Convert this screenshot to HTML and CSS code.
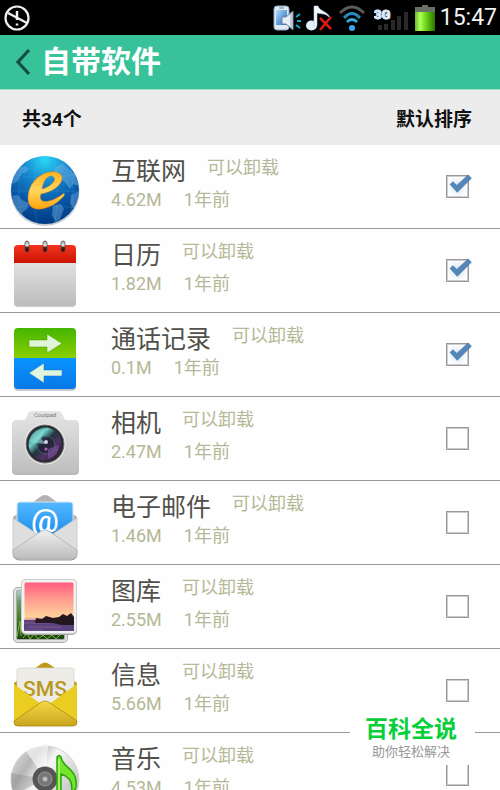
FILE: index.html
```html
<!DOCTYPE html>
<html lang="zh-CN">
<head>
    <meta charset="UTF-8">
    <meta name="viewport" content="width=device-width, initial-scale=1.0">
    <title>自带软件</title>
    <link rel="stylesheet" href="styles.css">
</head>
<body>
    <div class="app">
        <div class="status-bar">
            <svg width="26" height="26" viewBox="0 0 26 26" fill="none" stroke="#f0f0f0">
                <circle cx="13" cy="13" r="11.5" stroke-width="2.2"/>
                <path d="M4 8L23 18" stroke-width="2.2"/>
                <path d="M13 6V15M13 18.500V20.500" stroke-width="2.500"/>
            </svg>
            <div class="status-icons">
                <svg width="28" height="28" viewBox="0 0 28 28">
                    <defs>
                        <linearGradient id="phone" x2="1" y2="1"><stop stop-color="#b5dcff"/><stop offset="1" stop-color="#1765b8"/></linearGradient>
                    </defs>
                    <rect x="1" y="2" width="15" height="24" rx="3" fill="#dfe8f3" stroke="#8fa9c9"/>
                    <rect x="3" y="6" width="11" height="15" fill="url(#phone)"/>
                    <path d="M6 4H11" stroke="#71839b"/>
                    <path d="M9 13H13L20 7V26L13 20H9Z" fill="#e6eef7" stroke="#6f86a2"/>
                    <path d="M18 9V24" stroke="#97a9be"/>
                    <path d="M23 13L27 10M24 17H28M23 21L27 24" stroke="#16a9cf" stroke-width="2"/>
                </svg>
                <svg width="28" height="28" viewBox="0 0 28 28">
                    <ellipse cx="5.500" cy="21.500" rx="5.500" ry="5" fill="#e4f1ff"/>
                    <path d="M8 22V2H12C14 8 22 7 24 14C20 9 15 10 11 9V22Z" fill="#f5faff" stroke="#a9c4e2" stroke-width=".6"/>
                    <path d="M14 14L25 25M25 13L14 26" stroke="#dc1717" stroke-width="2.600"/>
                </svg>
                <svg width="26" height="28" viewBox="0 0 26 28" fill="none" stroke-width="2.800">
                    <path d="M1 9Q13 -3 25 9" stroke="#5a5c61"/>
                    <path d="M5 14Q13 5 21 14" stroke="#258bc4"/>
                    <path d="M8 18Q13 13 18 18" stroke="#3aa8e0"/>
                    <circle cx="13" cy="24" r="3" fill="#35a9f0"/>
                </svg>
                <svg class="signal" width="36" height="28" viewBox="0 0 36 28">
                    <path d="M4 26V21H8V26ZM10 26V20H14V26ZM17 26V16H21V26ZM23 26V12H27V26ZM30 26V8H34V26Z" fill="#292929"/>
                    <text class="net-label" x="0" y="15">3G</text>
                </svg>
                <svg width="20" height="28" viewBox="0 0 20 28">
                    <defs>
                        <linearGradient id="charge"><stop stop-color="#65bb21"/><stop offset=".25" stop-color="#b1ff62"/><stop offset=".55" stop-color="#6bd514"/><stop offset="1" stop-color="#2b7500"/></linearGradient>
                    </defs>
                    <path d="M0 3H7V1H13V3H20V9H0Z" fill="#6b7067"/>
                    <path d="M0 8H20V27H0Z" fill="url(#charge)"/>
                </svg>
                <span class="clock">15:47</span>
            </div>
        </div>

        <header class="header">
            <button type="button" class="back-button" aria-label="返回">
                <svg width="16" height="28" viewBox="0 0 16 28" fill="none" stroke="#174d3f" stroke-width="3.200">
                    <path d="M14 2L3 14L14 26"/>
                </svg>
            </button>
            <h1 class="header-title">自带软件</h1>
        </header>

        <div class="toolbar">
            <span>共34个</span>
            <button type="button" class="sort-button">默认排序</button>
        </div>

        <ul class="app-list">
            <li class="app-item">
                <svg class="app-icon" viewBox="0 0 72 72">
                    <defs>
                        <radialGradient id="globe" cx=".5" cy=".05" r=".95"><stop stop-color="#29d8f5"/><stop offset=".35" stop-color="#1688cf"/><stop offset=".7" stop-color="#0754a5"/><stop offset="1" stop-color="#003c83"/></radialGradient>
                        <linearGradient id="gold" x2="0" y2="1"><stop stop-color="#ffb321"/><stop offset=".5" stop-color="#ffd65d"/><stop offset="1" stop-color="#ffa30c"/></linearGradient>
                        <clipPath id="globeClip"><circle cx="36" cy="35" r="34"/></clipPath>
                    </defs>
                    <circle cx="36" cy="36.500" r="34.500" fill="#c5ccd3"/>
                    <circle cx="36" cy="35" r="34" fill="url(#globe)"/>
                    <g clip-path="url(#globeClip)">
                        <path d="M3 23L10 13L16 11L20 14L16 18L12 19L9 26L3 29ZM46 13L53 8L66 19L70 31L64 29L61 34L55 26L49 25L44 19ZM3 41L9 40L13 45L20 48L18 54L13 58L12 65L6 59ZM44 51L52 49L55 54L51 64L47 68L43 60ZM62 40L70 36V51L66 56L61 48Z" fill="#82bae5" opacity=".4"/>
                        <path d="M16 0Q4 36 16 72M29 0Q21 36 29 72M45 0Q52 36 45 72M59 0Q69 36 59 72M0 18Q36 28 72 18M0 36H72M0 54Q36 46 72 54" fill="none" stroke="#67bae9" stroke-width=".6" opacity=".3"/>
                    </g>
                    <path fill-rule="evenodd" d="M19 42C20 25 35 15 47 17C60 20 51 36 32 39C28 50 43 48 55 38C56 41 54 42 53 43C42 55 18 61 19 42ZM33 34C44 31 49 23 43 21C38 20 34 27 33 34Z" fill="url(#gold)" stroke="#bf7622" stroke-width=".5"/>
                </svg>
                <div class="app-info">
                    <div class="app-heading"><label class="app-name" for="app1">互联网</label><span class="app-tag">可以卸载</span></div>
                    <div class="app-meta"><span>4.62M</span><span>1年前</span></div>
                </div>
                <input type="checkbox" class="app-check" id="app1" checked>
            </li>
            <li class="app-item">
                <svg class="app-icon" viewBox="0 0 72 72">
                    <defs>
                        <linearGradient id="paper" x2="0" y2="1"><stop stop-color="#f0f0f0"/><stop offset="1" stop-color="#bcbcbc"/></linearGradient>
                        <linearGradient id="red" x2="0" y2="1"><stop stop-color="#f53222"/><stop offset="1" stop-color="#c91500"/></linearGradient>
                        <linearGradient id="ring" x2="0" y2="1"><stop stop-color="#999"/><stop offset=".4" stop-color="#eee"/><stop offset=".6" stop-color="#421"/><stop offset="1" stop-color="#300"/></linearGradient>
                    </defs>
                    <rect x="5" y="7" width="62" height="61" rx="4" fill="#ccc"/>
                    <rect x="5" y="6" width="62" height="61" rx="4" fill="url(#paper)"/>
                    <path d="M5 24V10Q5 6 9 6H63Q67 6 67 10V24Z" fill="url(#red)"/>
                    <g fill="url(#ring)" stroke="#57423e" stroke-width=".7">
                        <rect x="16" y="2" width="4" height="11" rx="2"/>
                        <rect x="34" y="2" width="4" height="11" rx="2"/>
                        <rect x="52" y="2" width="4" height="11" rx="2"/>
                    </g>
                </svg>
                <div class="app-info">
                    <div class="app-heading"><label class="app-name" for="app2">日历</label><span class="app-tag">可以卸载</span></div>
                    <div class="app-meta"><span>1.82M</span><span>1年前</span></div>
                </div>
                <input type="checkbox" class="app-check" id="app2" checked>
            </li>
            <li class="app-item">
                <svg class="app-icon" viewBox="0 0 72 72">
                    <defs>
                        <linearGradient id="green" x2="0" y2="1"><stop stop-color="#45b500"/><stop offset="1" stop-color="#89cf00"/></linearGradient>
                        <linearGradient id="blue" x2="0" y2="1"><stop stop-color="#0894ff"/><stop offset="1" stop-color="#0878e8"/></linearGradient>
                    </defs>
                    <rect x="5" y="7" width="62" height="61" rx="4" fill="#c3c9ce"/>
                    <path d="M5 35V9Q5 5 9 5H63Q67 5 67 9V35Z" fill="url(#green)"/>
                    <path d="M5 35H67V62Q67 66 63 66H9Q5 66 5 62Z" fill="url(#blue)"/>
                    <path d="M20 17H38V11L53 20.500L38 30V24H20Z" fill="#e0f5d7" stroke="#479700" stroke-width=".5"/>
                    <path d="M53 47H35V40L20 50L35 60V53H53Z" fill="#e0f5df" stroke="#1471b4" stroke-width=".5"/>
                </svg>
                <div class="app-info">
                    <div class="app-heading"><label class="app-name" for="app3">通话记录</label><span class="app-tag">可以卸载</span></div>
                    <div class="app-meta"><span>0.1M</span><span>1年前</span></div>
                </div>
                <input type="checkbox" class="app-check" id="app3" checked>
            </li>
            <li class="app-item">
                <svg class="app-icon" viewBox="0 0 72 72">
                    <defs>
                        <linearGradient id="body" x2="0" y2="1"><stop stop-color="#e5e5e5"/><stop offset="1" stop-color="#bebebe"/></linearGradient>
                        <linearGradient id="lens" x2="1" y2="1"><stop offset=".1" stop-color="#092d34"/><stop offset=".3" stop-color="#6ed0cd"/><stop offset=".48" stop-color="#20343d"/><stop offset=".68" stop-color="#543269"/><stop offset="1" stop-color="#17101f"/></linearGradient>
                    </defs>
                    <path d="M3 19Q3 14 8 14H16L20 6Q21 5 24 5H48Q51 5 52 6L56 14H65Q70 14 70 19V64Q70 68 65 68H8Q3 68 3 64Z" fill="#b8b8b8"/>
                    <path d="M3 18Q3 13 8 13H16L20 5Q21 4 24 4H48Q51 4 52 5L56 13H65Q70 13 70 18V62Q70 66 65 66H8Q3 66 3 62Z" fill="url(#body)"/>
                    <text class="icon-text camera-brand" x="36" y="10">Coolpad</text>
                    <circle cx="36" cy="37" r="20.500" fill="#eee"/>
                    <circle cx="36" cy="37" r="19" fill="#282a30" stroke="#777" stroke-width="1"/>
                    <circle cx="36" cy="37" r="16.500" fill="url(#lens)"/>
                    <circle cx="37" cy="38" r="9" fill="#242036" stroke="#456e7b" stroke-width="1" opacity=".7"/>
                    <path d="M20 35Q23 22 36 22L32 32L37 37L28 36Z" fill="#8fe1d9" opacity=".6"/>
                    <path d="M39 42L50 38Q50 49 39 52Z" fill="#8157a1" opacity=".6"/>
                    <circle cx="37" cy="35" r="2" fill="#d7cfe2"/>
                    <circle cx="37" cy="42" r="1.500" fill="#ad6db6"/>
                </svg>
                <div class="app-info">
                    <div class="app-heading"><label class="app-name" for="app4">相机</label><span class="app-tag">可以卸载</span></div>
                    <div class="app-meta"><span>2.47M</span><span>1年前</span></div>
                </div>
                <input type="checkbox" class="app-check" id="app4">
            </li>
            <li class="app-item">
                <svg class="app-icon" viewBox="0 0 72 72">
                    <defs>
                        <linearGradient id="card" x2="0" y2="1"><stop stop-color="#54b8ff"/><stop offset="1" stop-color="#087fe5"/></linearGradient>
                    </defs>
                    <path d="M4 26L31 6Q36 2 41 6L68 26V65H4Z" fill="#b2b2b2"/>
                    <path d="M8 56V14Q8 11 11 11H61Q64 11 64 14V56Z" fill="url(#card)" stroke="#d9e5ee"/>
                    <text class="icon-text mail-at" x="36" y="41">@</text>
                    <path d="M4 27L36 48L68 27V63Q68 68 63 68H9Q4 68 4 63Z" fill="#dedede" stroke="#bbb" stroke-width=".6"/>
                    <path d="M4 59L31 41Q36 37 41 41L68 59V63Q68 68 63 68H9Q4 68 4 63Z" fill="url(#paper)" stroke="#aaa" stroke-width=".7"/>
                    <path d="M5 66Q7 69 10 69H62Q66 69 67 66" fill="none" stroke="#999"/>
                </svg>
                <div class="app-info">
                    <div class="app-heading"><label class="app-name" for="app5">电子邮件</label><span class="app-tag">可以卸载</span></div>
                    <div class="app-meta"><span>1.46M</span><span>1年前</span></div>
                </div>
                <input type="checkbox" class="app-check" id="app5">
            </li>
            <li class="app-item">
                <svg class="app-icon" viewBox="0 0 72 72">
                    <defs>
                        <linearGradient id="sunset" x2="0" y2="1"><stop stop-color="#ff547b"/><stop offset=".35" stop-color="#ff9a90"/><stop offset=".7" stop-color="#ffd19a"/><stop offset=".76" stop-color="#dc9e95"/></linearGradient>
                        <linearGradient id="field" x2="0" y2="1"><stop stop-color="#b3d9e8"/><stop offset=".25" stop-color="#6a9b65"/><stop offset=".5" stop-color="#498529"/><stop offset="1" stop-color="#193c0e"/></linearGradient>
                    </defs>
                    <rect x="6" y="14" width="51" height="52" rx="3" fill="url(#field)" stroke="#aaa" stroke-width="4"/>
                    <rect x="6" y="14" width="51" height="52" rx="3" fill="none" stroke="#e2e2e2" stroke-width="2"/>
                    <path d="M8 62L11 46L12 61M14 63L18 58L21 64L25 59L29 64L34 60L38 64L43 60L47 64L51 60" fill="none" stroke="#7bb93d"/>
                    <rect x="14" y="6" width="52" height="52" rx="3" fill="#8b8b8b" stroke="#aaa" stroke-width="4"/>
                    <rect x="14" y="6" width="52" height="51" rx="3" fill="url(#sunset)" stroke="#f1f1f1" stroke-width="3"/>
                    <path d="M15 45H65V56H15Z" fill="#59427d"/>
                    <path d="M15 48H40M19 52H52M15 55H34" stroke="#8a6297" stroke-width=".8"/>
                    <path d="M26 48L27 43L33 44L37 41L44 43L50 42L54 39L58 41L62 38L65 42V50H52L44 48Z" fill="#241720"/>
                </svg>
                <div class="app-info">
                    <div class="app-heading"><label class="app-name" for="app6">图库</label><span class="app-tag">可以卸载</span></div>
                    <div class="app-meta"><span>2.55M</span><span>1年前</span></div>
                </div>
                <input type="checkbox" class="app-check" id="app6">
            </li>
            <li class="app-item">
                <svg class="app-icon" viewBox="0 0 72 72">
                    <defs>
                        <linearGradient id="yellow" x2="0" y2="1"><stop stop-color="#f6d743"/><stop offset="1" stop-color="#caa51e"/></linearGradient>
                    </defs>
                    <path d="M5 24L32 5Q36 2 40 5L68 24V65H5Z" fill="#bd9816"/>
                    <path d="M8 55V12Q8 9 11 9H62Q65 9 65 12V55Z" fill="#eeece7" stroke="#d7d4cd" stroke-width=".7"/>
                    <text class="icon-text sms-label" x="36" y="37">SMS</text>
                    <path d="M5 25L36 48L68 25V63Q68 67 64 67H9Q5 67 5 63Z" fill="#ebcc20"/>
                    <path d="M5 62L31 44Q36 40 41 44L68 62V63Q68 67 64 67H9Q5 67 5 63Z" fill="url(#yellow)" stroke="#a98a15" stroke-width=".8"/>
                </svg>
                <div class="app-info">
                    <div class="app-heading"><label class="app-name" for="app7">信息</label><span class="app-tag">可以卸载</span></div>
                    <div class="app-meta"><span>5.66M</span><span>1年前</span></div>
                </div>
                <input type="checkbox" class="app-check" id="app7">
            </li>
            <li class="app-item">
                <svg class="app-icon" viewBox="0 0 72 72">
                    <defs>
                        <linearGradient id="disc" x2="1" y2=".7"><stop stop-color="#e8e8e8"/><stop offset=".3" stop-color="#b5b5b5"/><stop offset=".5" stop-color="#f7f7f7"/><stop offset="1" stop-color="#bcbcbc"/></linearGradient>
                    </defs>
                    <circle cx="36" cy="37" r="34" fill="url(#disc)" stroke="#d5d5d5"/>
                    <path d="M36 36L2 30Q1 42 5 52Z" fill="#777" opacity=".3"/>
                    <path d="M36 36L17 8Q27 2 39 3Z" fill="#fff" opacity=".6"/>
                    <circle cx="36" cy="36" r="12.500" fill="#555"/>
                    <circle cx="36" cy="36" r="7" fill="#777" stroke="#999"/>
                    <circle cx="36" cy="36" r="2.500" fill="#bbb"/>
                    <path d="M48 55V14Q50 11 52 14C53 25 69 25 67 43Q66 49 62 52Q66 35 52 31V58Q51 67 43 67Q37 67 38 61Q40 55 48 55Z" fill="#73e52c" stroke="#2ba60a" stroke-width="1.500"/>
                    <path d="M50 16V54" stroke="#d4ff9c"/>
                </svg>
                <div class="app-info">
                    <div class="app-heading"><label class="app-name" for="app8">音乐</label><span class="app-tag">可以卸载</span></div>
                    <div class="app-meta"><span>4.53M</span><span>1年前</span></div>
                </div>
                <input type="checkbox" class="app-check" id="app8">
            </li>
        </ul>

        <div class="badge">
            <div class="badge-title">百科全说</div>
            <div class="badge-text">助你轻松解决</div>
        </div>
    </div>
</body>
</html>
```

FILE: styles.css
```css
* {
    box-sizing: border-box;
}

body {
    margin: 0;
    background-color: #fefefe;
    font-family: Roboto, "Noto Sans CJK SC", sans-serif;
}

button {
    padding: 0;
    border: 0;
    background: none;
    font-family: inherit;
    cursor: pointer;
}

.app {
    position: relative;
    display: flex;
    flex-direction: column;
    height: 100vh;
    overflow: hidden;
}

.status-bar {
    display: flex;
    flex-shrink: 0;
    align-items: center;
    justify-content: space-between;
    height: 35px;
    padding: 0 3px 0 4px;
    background-color: #000;
}

.status-icons {
    display: flex;
    align-items: center;
    gap: 5px;
}

.signal {
    margin-left: 4px;
}

.net-label {
    fill: #dcebff;
    stroke: #dcebff;
    stroke-width: 1px;
    font-size: 13px;
    font-weight: 900;
}

.clock {
    color: #f2f2f2;
    font-size: 23px;
    line-height: 35px;
}

.header {
    display: flex;
    flex-shrink: 0;
    align-items: center;
    gap: 10px;
    height: 55px;
    padding-left: 15px;
    background-color: #37c299;
    border-bottom: 1px solid #a5dfcb;
}

.back-button {
    display: flex;
}

.header-title {
    margin: 0;
    color: #fff;
    font-size: 30px;
    line-height: 56px;
    font-weight: bold;
}

.toolbar {
    display: flex;
    flex-shrink: 0;
    align-items: center;
    justify-content: space-between;
    height: 55px;
    padding: 0 28px 0 22px;
    background-color: #ececec;
    color: #111;
    font-size: 19px;
    font-weight: bold;
}

.sort-button {
    color: #111;
    font-size: 19px;
    font-weight: bold;
}

.app-list {
    flex: 1;
    min-height: 0;
    margin: 0;
    padding: 0;
    overflow: hidden;
    list-style: none;
}

.app-item {
    display: flex;
    align-items: flex-start;
    height: 84px;
    padding: 10px 31px 0 9px;
    border-bottom: 1px solid #999;
}

.app-icon {
    flex-shrink: 0;
    width: 72px;
    height: 72px;
}

.icon-text {
    text-anchor: middle;
}

.camera-brand {
    fill: #777;
    font-size: 6px;
}

.mail-at {
    fill: #fff;
    font-size: 31px;
    font-weight: 500;
}

.sms-label {
    fill: #b69822;
    font-size: 21px;
    font-weight: 500;
}

.app-info {
    flex: 1;
    padding-left: 30px;
}

.app-heading {
    display: flex;
    gap: 21px;
    height: 32px;
}

.app-name {
    color: #51514b;
    font-size: 25px;
    line-height: 34px;
}

.app-tag {
    color: #b5b897;
    font-size: 18px;
    line-height: 26px;
}

.app-meta {
    display: flex;
    gap: 22px;
    color: #b5b897;
    font-size: 18px;
    line-height: 26px;
}

.app-check {
    position: relative;
    appearance: none;
    width: 23px;
    height: 23px;
    margin: 20px 0 0;
    border: 1px solid #999;
    outline: 1px solid #ccc;
    outline-offset: -2px;
}

.app-check:checked {
    background: radial-gradient(circle, #d3e3f3, #fefefe 70%);
}

.app-check:checked::after {
    content: "";
    position: absolute;
    left: 2px;
    top: -2px;
    width: 23px;
    height: 19px;
    background-color: #5487b6;
    clip-path: polygon(3% 55%, 17% 38%, 34% 58%, 83% 3%, 99% 22%, 36% 99%);
}

.badge {
    position: absolute;
    right: 25px;
    bottom: 25px;
    width: 125px;
    height: 55px;
    padding: 4px 3px 0 0;
    background-color: #fefefe;
    text-align: center;
}

.badge-title {
    color: #07cf3b;
    font-size: 23px;
    line-height: 32px;
    font-weight: bold;
}

.badge-text {
    color: #999;
    font-size: 13px;
    line-height: 12px;
}
```
